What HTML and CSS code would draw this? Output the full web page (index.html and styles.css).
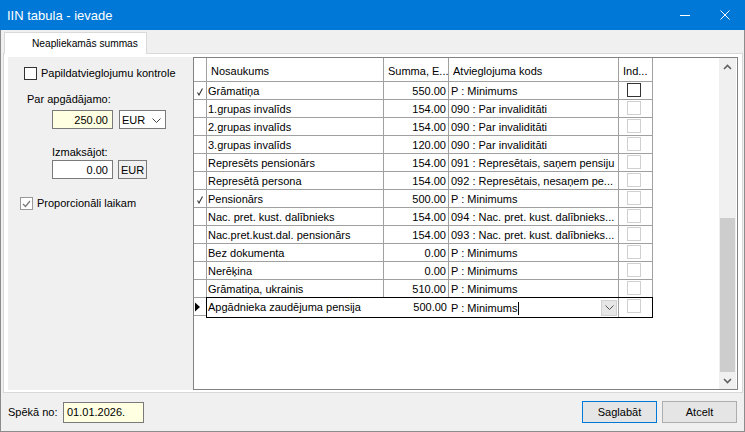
FILE: index.html
```html
<!DOCTYPE html>
<html lang="lv">
<head>
    <meta charset="UTF-8">
    <title>IIN tabula - ievade</title>
    <link rel="stylesheet" href="styles.css">
</head>
<body>
<div class="window">
    <div class="titlebar">
        <span class="title">IIN tabula - ievade</span>
        <span class="wbtn"><svg width="10" height="10"><path d="M0 5.5H10" stroke="#fff"/></svg></span>
        <span class="wbtn"><svg width="10" height="10"><path d="M0.5 0.5L9.5 9.5M9.5 0.5L0.5 9.5" stroke="#fff"/></svg></span>
    </div>
    <div class="client">
        <div class="tabs"><div class="tab">Neapliekamās summas</div></div>
        <div class="tabpage">
            <div class="side">
                <div class="chk chk-a"><span class="box"></span>Papildatvieglojumu kontrole</div>
                <div class="lbl lbl-par">Par apgādājamo:</div>
                <div class="inrow inrow-a">
                    <div class="num yellow">250.00</div>
                    <div class="combo">EUR<svg width="9" height="5"><path d="M0.5 0.5L4.5 4.5L8.5 0.5" fill="none" stroke="#444"/></svg></div>
                </div>
                <div class="lbl lbl-izm">Izmaksājot:</div>
                <div class="inrow inrow-b">
                    <div class="num">0.00</div>
                    <div class="cur">EUR</div>
                </div>
                <div class="chk chk-b"><span class="box"><svg width="9" height="8"><path d="M1 4L3.5 6.5L8 1" fill="none" stroke="#777" stroke-width="1.2"/></svg></span>Proporcionāli laikam</div>
            </div>
            <div class="grid">
                <div class="gbody">
                    <div class="grow head">
                        <div class="c ri"></div>
                        <div class="c cn">Nosaukums</div>
                        <div class="c cs">Summa, E...</div>
                        <div class="c cc">Atvieglojuma kods</div>
                        <div class="c ck">Ind...</div>
                    </div>
                    <div class="grow">
                        <div class="c ri"><svg class="tick" width="6" height="8"><path d="M0.5 4.5L2 7L5.5 0.5" fill="none" stroke="#333" stroke-width="1.1"/></svg></div>
                        <div class="c cn">Grāmatiņa</div>
                        <div class="c cs">550.00</div>
                        <div class="c cc">P : Minimums</div>
                        <div class="c ck"><span class="cb on"></span></div>
                    </div>
                    <div class="grow">
                        <div class="c ri"></div>
                        <div class="c cn">1.grupas invalīds</div>
                        <div class="c cs">154.00</div>
                        <div class="c cc">090 : Par invaliditāti</div>
                        <div class="c ck"><span class="cb"></span></div>
                    </div>
                    <div class="grow">
                        <div class="c ri"></div>
                        <div class="c cn">2.grupas invalīds</div>
                        <div class="c cs">154.00</div>
                        <div class="c cc">090 : Par invaliditāti</div>
                        <div class="c ck"><span class="cb"></span></div>
                    </div>
                    <div class="grow">
                        <div class="c ri"></div>
                        <div class="c cn">3.grupas invalīds</div>
                        <div class="c cs">120.00</div>
                        <div class="c cc">090 : Par invaliditāti</div>
                        <div class="c ck"><span class="cb"></span></div>
                    </div>
                    <div class="grow">
                        <div class="c ri"></div>
                        <div class="c cn">Represēts pensionārs</div>
                        <div class="c cs">154.00</div>
                        <div class="c cc">091 : Represētais, saņem pensiju</div>
                        <div class="c ck"><span class="cb"></span></div>
                    </div>
                    <div class="grow">
                        <div class="c ri"></div>
                        <div class="c cn">Represētā persona</div>
                        <div class="c cs">154.00</div>
                        <div class="c cc">092 : Represētais, nesaņem pe...</div>
                        <div class="c ck"><span class="cb"></span></div>
                    </div>
                    <div class="grow">
                        <div class="c ri"><svg class="tick" width="6" height="8"><path d="M0.5 4.5L2 7L5.5 0.5" fill="none" stroke="#333" stroke-width="1.1"/></svg></div>
                        <div class="c cn">Pensionārs</div>
                        <div class="c cs">500.00</div>
                        <div class="c cc">P : Minimums</div>
                        <div class="c ck"><span class="cb"></span></div>
                    </div>
                    <div class="grow">
                        <div class="c ri"></div>
                        <div class="c cn">Nac. pret. kust. dalībnieks</div>
                        <div class="c cs">154.00</div>
                        <div class="c cc">094 : Nac. pret. kust. dalībnieks...</div>
                        <div class="c ck"><span class="cb"></span></div>
                    </div>
                    <div class="grow">
                        <div class="c ri"></div>
                        <div class="c cn">Nac.pret.kust.dal. pensionārs</div>
                        <div class="c cs">154.00</div>
                        <div class="c cc">093 : Nac. pret. kust. dalībnieks...</div>
                        <div class="c ck"><span class="cb"></span></div>
                    </div>
                    <div class="grow">
                        <div class="c ri"></div>
                        <div class="c cn">Bez dokumenta</div>
                        <div class="c cs">0.00</div>
                        <div class="c cc">P : Minimums</div>
                        <div class="c ck"><span class="cb"></span></div>
                    </div>
                    <div class="grow">
                        <div class="c ri"></div>
                        <div class="c cn">Nerēķina</div>
                        <div class="c cs">0.00</div>
                        <div class="c cc">P : Minimums</div>
                        <div class="c ck"><span class="cb"></span></div>
                    </div>
                    <div class="grow">
                        <div class="c ri"></div>
                        <div class="c cn">Grāmatiņa, ukrainis</div>
                        <div class="c cs">510.00</div>
                        <div class="c cc">P : Minimums</div>
                        <div class="c ck"><span class="cb"></span></div>
                    </div>
                    <div class="grow edit">
                        <div class="c ri"><svg width="6" height="10"><path d="M0 0.5L5 5L0 9.5Z" fill="#000"/></svg></div>
                        <div class="ebox">
                            <div class="c cn">Apgādnieka zaudējuma pensija</div>
                            <div class="c cs">500.00</div>
                            <div class="c cc"><span class="etext">P : Minimums</span><span class="caret"></span><span class="ddbtn"><svg width="9" height="5"><path d="M0.5 0.5L4.5 4.5L8.5 0.5" fill="none" stroke="#555"/></svg></span></div>
                            <div class="c ck"><span class="cb"></span></div>
                        </div>
                    </div>
                </div>
                <div class="vscroll">
                    <div class="sbtn"><svg width="9" height="6"><path d="M1 5L4.5 1.5L8 5" fill="none" stroke="#606060" stroke-width="1.6"/></svg></div>
                    <div class="strack"><div class="thumb"></div></div>
                    <div class="sbtn"><svg width="9" height="6"><path d="M1 1L4.5 4.5L8 1" fill="none" stroke="#606060" stroke-width="1.6"/></svg></div>
                </div>
            </div>
        </div>
        <div class="footer">
            <span class="flabel">Spēkā no:</span>
            <div class="date">01.01.2026.</div>
            <span class="spacer"></span>
            <button class="btn def">Saglabāt</button>
            <button class="btn">Atcelt</button>
        </div>
    </div>
</div>
</body>
</html>
```

FILE: styles.css
```css
body {
    margin: 0;
    font-family: "Liberation Sans", Arial, sans-serif;
    font-size: 11px;
    color: #000;
}
.window {
    width: 745px;
    height: 432px;
    display: flex;
    flex-direction: column;
    background: #f0f0f0;
}
.titlebar {
    height: 30px;
    flex: none;
    display: flex;
    align-items: center;
    background: #0078d7;
    color: #fff;
}
.title {
    flex: 1;
    padding-left: 7px;
    font-size: 13px;
}
.wbtn {
    width: 40px;
    height: 30px;
    display: flex;
    align-items: center;
    justify-content: center;
}
.wbtn svg { display: block; }

.client {
    flex: 1;
    min-height: 0;
    display: flex;
    flex-direction: column;
    border: 1px solid #8c8c8c;
    border-top: none;
}
.tabs {
    height: 24px;
    flex: none;
    box-sizing: border-box;
    padding: 2px 0 0 3px;
    margin-bottom: -1px;
    display: flex;
}
.tab {
    position: relative;
    z-index: 1;
    width: 143px;
    height: 22px;
    box-sizing: border-box;
    border: 1px solid #d9d9d9;
    border-bottom: none;
    background: #fff;
    padding-left: 27px;
    font-size: 10.2px;
    line-height: 21px;
}
.tabpage {
    height: 340px;
    flex: none;
    box-sizing: border-box;
    margin: 0 1px 0 2px;
    padding: 3px 4px 2px 4px;
    border: 1px solid #d9d9d9;
    background: #fff;
    display: flex;
}

/* left panel */
.side {
    width: 185px;
    flex: none;
    background: #f0f0f0;
    display: flex;
    flex-direction: column;
    align-items: flex-start;
}
.chk {
    display: flex;
    align-items: center;
    line-height: 13px;
}
.chk .box {
    width: 13px;
    height: 13px;
    box-sizing: border-box;
    border: 1px solid #333;
    background: #fff;
    margin-right: 4px;
    display: flex;
    align-items: center;
    justify-content: center;
}
.chk-a { margin: 10px 0 0 16px; }
.chk-b { margin: 18px 0 0 12px; }
.chk-b .box { border-color: #999; }
.lbl { line-height: 14px; }
.lbl-par { margin: 12px 0 0 19px; }
.lbl-izm { margin: 16px 0 0 44px; }
.inrow {
    display: flex;
    height: 19px;
    margin-left: 44px;
}
.inrow-a { margin-top: 4px; }
.inrow-b { margin-top: 1px; }
.num {
    width: 61px;
    box-sizing: border-box;
    border: 1px solid #7a7a7a;
    background: #fff;
    text-align: right;
    padding-right: 4px;
    line-height: 18px;
}
.num.yellow { background: #ffffe1; }
.combo {
    width: 47px;
    margin-left: 6px;
    box-sizing: border-box;
    border: 1px solid #7a7a7a;
    background: #fff;
    padding: 1px 4px 0 2px;
    display: flex;
    align-items: center;
    justify-content: space-between;
}
.cur {
    width: 29px;
    margin-left: 5px;
    box-sizing: border-box;
    border: 1px solid #7a7a7a;
    padding-left: 2px;
    line-height: 18px;
}

/* grid */
.grid {
    flex: 1;
    min-width: 0;
    display: flex;
    border: 1px solid #828282;
    background: #fff;
}
.gbody { flex: 1; }
.grow {
    display: flex;
    height: 18px;
}
.grow.head { height: 24px; }
.c {
    flex: none;
    box-sizing: border-box;
    border-right: 1px solid #a0a0a0;
    border-bottom: 1px solid #a0a0a0;
    white-space: nowrap;
    overflow: hidden;
    line-height: 19px;
}
.ri {
    width: 13px;
    display: flex;
    align-items: center;
    justify-content: center;
}
.tick { margin-top: 3px; }
.cn { width: 177px; padding-left: 1px; }
.cs { width: 65px; text-align: right; padding-right: 2px; }
.cc { width: 170px; padding-left: 2px; }
.ck { width: 34px; padding: 1px 0 0 8px; }
.head .c {
    line-height: 26px;
    padding: 0 0 0 4px;
    text-align: left;
}
.cb {
    display: block;
    width: 14px;
    height: 14px;
    box-sizing: border-box;
    border: 1px solid #d0d0d0;
}
.cb.on { border-color: #333; }

.edit .ri {
    width: 12px;
    border-right: none;
    justify-content: flex-start;
    padding-left: 1px;
}
.ebox {
    display: flex;
    height: 19px;
    margin-top: -1px;
    border: 1px solid #000;
}
.ebox .c { border-bottom: none; }
.ebox .cn, .ebox .cs { border-right: none; }
.ebox .ck { width: 33px; border-right: none; }
.ebox .cc {
    display: flex;
    align-items: center;
}
.etext { padding-top: 2px; }
.caret {
    width: 1px;
    height: 13px;
    margin: 1px 0 0 1px;
    background: #000;
}
.ddbtn {
    width: 16px;
    height: 16px;
    margin: 0 1px 0 auto;
    box-sizing: border-box;
    border: 1px solid #d0d0d0;
    background: #e6e6e6;
    display: flex;
    align-items: center;
    justify-content: center;
}

.vscroll {
    width: 17px;
    flex: none;
    margin-right: 1px;
    background: #f0f0f0;
    display: flex;
    flex-direction: column;
}
.sbtn {
    height: 17px;
    display: flex;
    align-items: center;
    justify-content: center;
}
.strack {
    flex: 1;
    display: flex;
    flex-direction: column;
    justify-content: flex-end;
}
.thumb {
    height: 154px;
    margin: 0 1px;
    background: #cdcdcd;
}

/* bottom bar */
.footer {
    flex: 1;
    display: flex;
    align-items: center;
    padding: 0 7px;
}
.flabel { width: 55px; }
.date {
    width: 81px;
    height: 21px;
    box-sizing: border-box;
    border: 1px solid #7a7a7a;
    background: #ffffe1;
    padding-left: 3px;
    line-height: 19px;
}
.spacer { flex: 1; }
.btn {
    width: 75px;
    height: 22px;
    margin-left: 5px;
    padding: 0;
    box-sizing: border-box;
    border: 1px solid #adadad;
    background: #e5e5e5;
    font: inherit;
    color: #000;
}
.btn.def { border-color: #0078d7; }
```
